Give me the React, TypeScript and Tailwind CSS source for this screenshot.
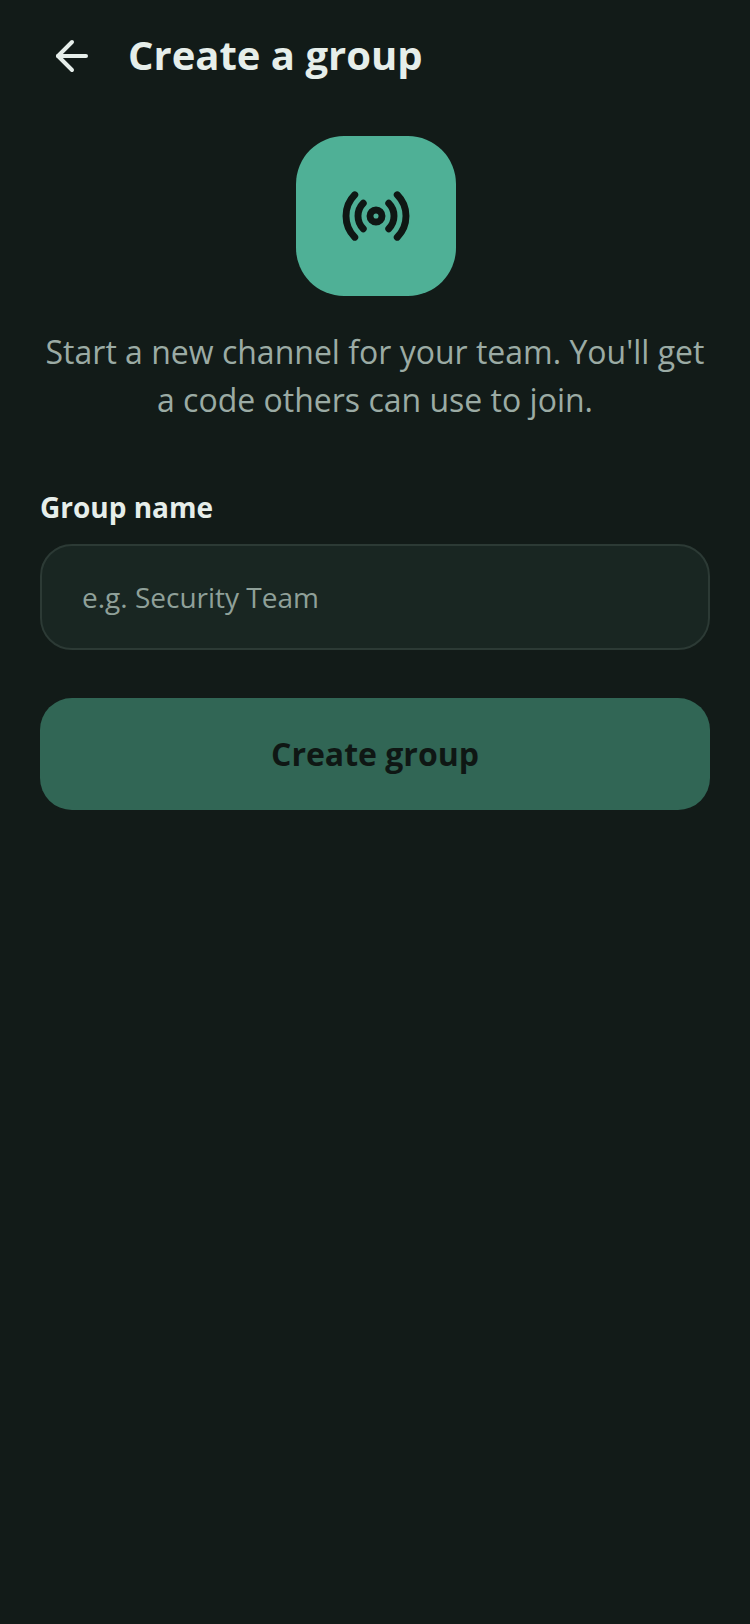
import { ArrowLeft, Radio } from "lucide-react";

export default function App() {
  return (
    <div className="min-h-[1624px] w-[750px] bg-[#121b18] font-['Open_Sans',sans-serif] flex flex-col">
      <header className="flex items-center gap-8 pl-12 pt-8">
        <ArrowLeft size={48} strokeWidth={2} className="text-[#e6eeea]" />
        <h1 className="pb-[2px] text-[40px] leading-[46px] font-bold text-[#e6eeea]">Create a group</h1>
      </header>
      <main className="flex flex-col px-10 pt-14">
        <div className="ml-[2px] flex h-40 w-40 items-center justify-center self-center rounded-[48px] bg-[#4fb096]">
          <Radio size={72} strokeWidth={2.3} className="text-[#0f1714]" />
        </div>
        <p className="mt-8 text-center text-[32px] leading-[48px] text-[#9baba4]">
          Start a new channel for your team. You'll get a code others can use to join.
        </p>
        <label className="mt-[63px] text-[28px] leading-[40px] font-bold text-[#e6eeea]">Group name</label>
        <div className="mt-[17px] flex h-[106px] items-center rounded-[32px] border-2 border-[#2c3a35] bg-[#192622] px-10 text-[28px] text-[#8fa099]">
          e.g. Security Team
        </div>
        <button className="mt-12 flex h-[112px] items-center justify-center rounded-[32px] bg-[#316655] text-[32px] font-bold text-[#0f1714]">
          Create group
        </button>
      </main>
    </div>
  );
}
